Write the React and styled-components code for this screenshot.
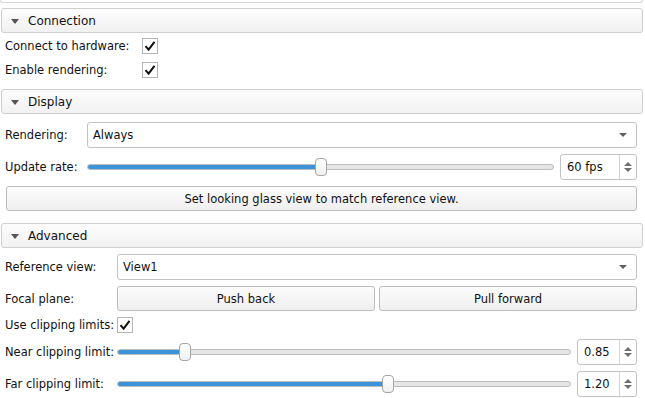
import styled, { createGlobalStyle } from "styled-components";

const GlobalStyle = createGlobalStyle`
  body {
    margin: 0;
    background: #ffffff;
    font-family: "DejaVu Sans", "Liberation Sans", sans-serif;
    font-size: 11px;
    color: #111;
  }
`;

const Page = styled.div`
  width: 645px;
  height: 398px;
  overflow: hidden;
  padding: 0 2px 0 1px;
  box-sizing: border-box;
`;

const TopEdge = styled.div`
  height: 2px;
  border: 1px solid #d6d6d6;
  border-top: none;
  border-radius: 0 0 3px 3px;
  margin-left: -1px;
`;

const Header = styled.div`
  display: flex;
  align-items: center;
  gap: 9px;
  height: 25px;
  box-sizing: border-box;
  margin-top: ${(p) => p.$top}px;
  padding-left: 9px;
  border: 1px solid #cfcfcf;
  border-radius: 3px;
  background: linear-gradient(#fdfdfd, #f1f1f1);
  font-size: 12px;
`;

const Arrow = styled.span`
  width: 0;
  height: 0;
  border-left: 4px solid transparent;
  border-right: 4px solid transparent;
  border-top: 5px solid #555;
  margin-top: 1px;
`;

const Form = styled.div`
  display: grid;
  grid-template-columns: ${(p) => p.$label}px 1fr;
  row-gap: ${(p) => p.$gap}px;
  align-items: center;
  margin-top: ${(p) => p.$top}px;
  padding: 0 6px 0 4px;
  font-size: 11.5px;
`;

const Label = styled.div`
  white-space: nowrap;
`;

const Full = styled.div`
  grid-column: 1 / -1;
  padding-left: 1px;
`;

const Check = styled.div`
  width: 16px;
  height: 16px;
  box-sizing: border-box;
  border: 1px solid #b5b5b5;
  background: #fff;
  display: flex;
  align-items: center;
  justify-content: center;
`;

const Combo = styled.div`
  height: 26px;
  box-sizing: border-box;
  border: 1px solid #c3c3c3;
  border-radius: 3px;
  background: #fff;
  display: flex;
  align-items: center;
  justify-content: space-between;
  padding: 0 9px 0 5px;
`;

const SmallArrow = styled.span`
  width: 0;
  height: 0;
  border-left: 4px solid transparent;
  border-right: 4px solid transparent;
  border-top: 4px solid #606060;
`;

const Button = styled.div`
  height: 25px;
  box-sizing: border-box;
  border: 1px solid #bdbdbd;
  border-radius: 3px;
  background: linear-gradient(#fcfcfc, #efefef);
  display: flex;
  align-items: center;
  justify-content: center;
`;

const Pair = styled.div`
  display: grid;
  grid-template-columns: 1fr 1fr;
  gap: 4px;
`;

const SliderRow = styled.div`
  display: flex;
  align-items: center;
  gap: 6px;
  height: 26px;
`;

const Track = styled.div`
  flex: 1;
  position: relative;
  height: 18px;
  display: flex;
  align-items: center;
`;

const Groove = styled.div`
  flex: 1;
  height: 6px;
  box-sizing: border-box;
  border: 1px solid #bcbcbc;
  border-radius: 3px;
  background: #e6e6e6;
  overflow: hidden;
`;

const Fill = styled.div`
  height: 100%;
  background: #3d93d9;
  border-right: 1px solid #2a6fae;
`;

const Handle = styled.div`
  position: absolute;
  top: 0;
  width: 12px;
  height: 18px;
  box-sizing: border-box;
  border: 1px solid #a5a5a5;
  border-radius: 4px;
  background: linear-gradient(#ffffff, #f0f0f0);
`;

const Spin = styled.div`
  width: ${(p) => p.$w}px;
  height: 26px;
  box-sizing: border-box;
  border: 1px solid #c3c3c3;
  border-radius: 3px;
  background: #fff;
  display: flex;
  align-items: stretch;
`;

const SpinText = styled.div`
  flex: 1;
  display: flex;
  align-items: center;
  padding-left: 6px;
`;

const SpinButtons = styled.div`
  width: 16px;
  border-left: 1px solid #d2d2d2;
  display: flex;
  flex-direction: column;
  align-items: center;
  justify-content: center;
  gap: 2px;
`;

const Tri = styled.span`
  width: 0;
  height: 0;
  border-left: 4px solid transparent;
  border-right: 4px solid transparent;
  ${(p) =>
    p.$up ? "border-bottom: 4px solid #707070;" : "border-top: 4px solid #707070;"}
`;

const Tick = () => (
  <Check>
    <svg width="12" height="12" viewBox="0 0 12 12">
      <path d="M1.5 6.2 L4.6 9.6 L10.5 1.8" fill="none" stroke="#111" strokeWidth="2" />
    </svg>
  </Check>
);

const Slider = ({ value, spin, width }) => (
  <SliderRow>
    <Track>
      <Groove>
        <Fill style={{ width: `calc(${value * 100}% + 6px - ${value * 12}px)` }} />
      </Groove>
      <Handle style={{ left: `calc(${value * 100}% - ${value * 12}px)` }} />
    </Track>
    <Spin $w={width}>
      <SpinText>{spin}</SpinText>
      <SpinButtons>
        <Tri $up />
        <Tri />
      </SpinButtons>
    </Spin>
  </SliderRow>
);

const App = () => {
  return (
    <Page>
      <GlobalStyle />
      <TopEdge />

      <Header $top={5}>
        <Arrow />
        Connection
      </Header>
      <Form $label={137} $gap={8} $top={5}>
        <Label>Connect to hardware:</Label>
        <Tick />
        <Label>Enable rendering:</Label>
        <Tick />
      </Form>

      <Header $top={11}>
        <Arrow />
        Display
      </Header>
      <Form $label={82} $gap={6} $top={8}>
        <Label>Rendering:</Label>
        <Combo>
          Always
          <SmallArrow />
        </Combo>
        <Label>Update rate:</Label>
        <Slider value={0.5} spin="60 fps" width={77} />
        <Full>
          <Button>Set looking glass view to match reference view.</Button>
        </Full>
      </Form>

      <Header $top={12}>
        <Arrow />
        Advanced
      </Header>
      <Form $label={112} $gap={6} $top={6}>
        <Label>Reference view:</Label>
        <Combo>
          View1
          <SmallArrow />
        </Combo>
        <Label>Focal plane:</Label>
        <Pair>
          <Button>Push back</Button>
          <Button>Pull forward</Button>
        </Pair>
        <Label>Use clipping limits:</Label>
        <Tick />
        <Label>Near clipping limit:</Label>
        <Slider value={0.14} spin="0.85" width={60} />
        <Label>Far clipping limit:</Label>
        <Slider value={0.6} spin="1.20" width={60} />
      </Form>
    </Page>
  );
};

export default App;
